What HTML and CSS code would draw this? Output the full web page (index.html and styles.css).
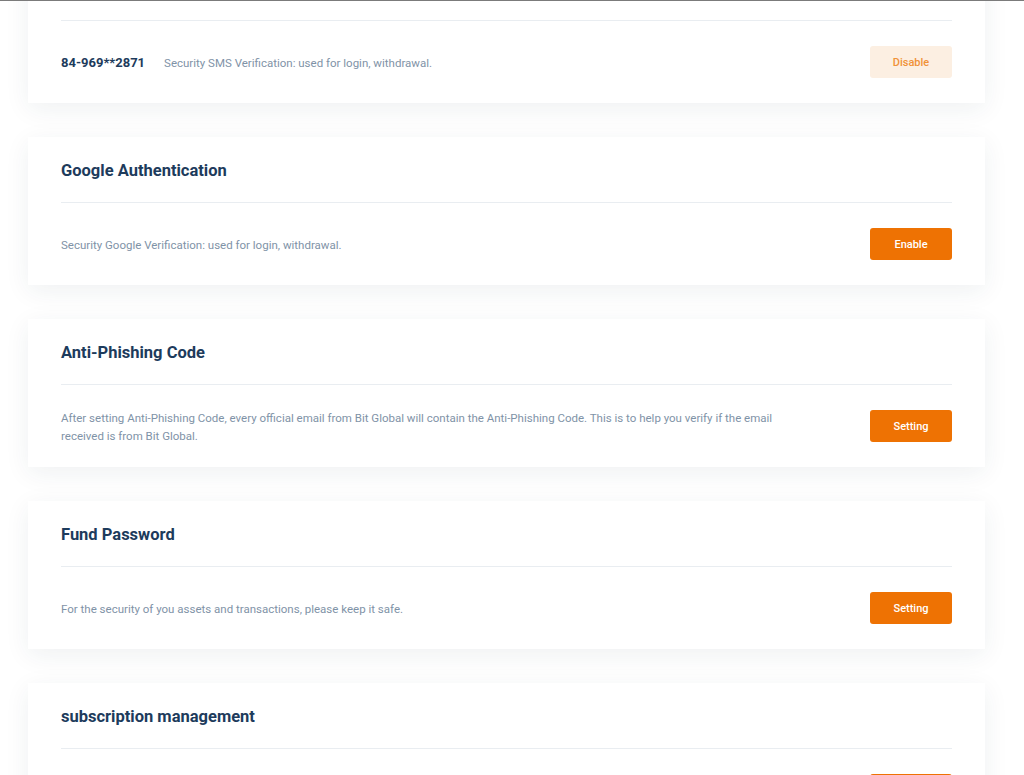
FILE: index.html
```html
<!DOCTYPE html>
<html lang="en">
<head>
  <meta charset="UTF-8">
  <title>Security Settings</title>
  <link rel="stylesheet" href="styles.css">
</head>
<body>
  <div class="topline"></div>
  <div class="viewport">
    <div class="list">

      <!-- SMS -->
      <div class="card">
        <div class="card-head">
          <h3>SMS Authentication</h3>
        </div>
        <div class="card-body">
          <div class="info">
            <span class="phone">84-969**2871</span>
            <span class="desc">Security SMS Verification: used for login, withdrawal.</span>
          </div>
          <button class="btn btn-light">Disable</button>
        </div>
      </div>

      <!-- Google -->
      <div class="card">
        <div class="card-head">
          <h3>Google Authentication</h3>
        </div>
        <div class="card-body">
          <div class="info">
            <span class="desc">Security Google Verification: used for login, withdrawal.</span>
          </div>
          <button class="btn">Enable</button>
        </div>
      </div>

      <!-- Anti-phishing -->
      <div class="card">
        <div class="card-head">
          <h3>Anti-Phishing Code</h3>
        </div>
        <div class="card-body">
          <div class="info">
            <p class="desc wide">After setting Anti-Phishing Code, every official email from Bit Global will contain the Anti-Phishing Code. This is to help you verify if the email received is from Bit Global.</p>
          </div>
          <button class="btn">Setting</button>
        </div>
      </div>

      <!-- Fund password -->
      <div class="card">
        <div class="card-head">
          <h3>Fund Password</h3>
        </div>
        <div class="card-body">
          <div class="info">
            <span class="desc">For the security of you assets and transactions, please keep it safe.</span>
          </div>
          <button class="btn">Setting</button>
        </div>
      </div>

      <!-- Subscription -->
      <div class="card">
        <div class="card-head">
          <h3>subscription management</h3>
        </div>
        <div class="card-body">
          <div class="info">
            <span class="desc">Manage the emails you receive from Bit Global.</span>
          </div>
          <button class="btn">Setting</button>
        </div>
      </div>

    </div>
  </div>
</body>
</html>
```

FILE: styles.css
```css
/* page */
html, body {
  margin: 0;
  height: 100%;
  overflow: hidden;
}
body {
  font-family: Roboto, "Noto Sans", Arial, sans-serif;
  background: #fff;
  color: #1d3b5c;
}
.topline {
  height: 1px;
  background: #7b7b7b;
}
.viewport {
  height: 774px;
  overflow: hidden;
}
/* scrolled position: first card is cut at the top */
.list {
  margin-top: -46px;
  padding: 0 39px 0 28px;
  display: flex;
  flex-direction: column;
  gap: 34px;
}

/* cards */
.card {
  background: #fff;
  box-shadow: 0 6px 24px rgba(30, 50, 70, 0.07);
  padding: 0 33px;
}
.card-head {
  height: 65px;
  display: flex;
  align-items: center;
  border-bottom: 1px solid #e9edf1;
}
.card-head h3 {
  margin: 0;
  font-size: 16.5px;
  font-weight: 700;
  color: #1d3b5c;
  padding-top: 2px;
}
.card-body {
  height: 82px;
  display: flex;
  align-items: center;
  justify-content: space-between;
}
.info {
  display: flex;
  align-items: center;
  gap: 19px;
  padding-top: 1px;
}
.phone {
  font-size: 13px;
  font-weight: 700;
  color: #1d3b5c;
}
.desc {
  font-size: 11.5px;
  color: #7f93a7;
  margin: 0;
}
.desc.wide {
  max-width: 740px;
  line-height: 18px;
}

/* buttons */
.btn {
  width: 82px;
  height: 32px;
  border: none;
  border-radius: 3px;
  background: #ee7203;
  color: #fff;
  font-family: inherit;
  font-size: 11px;
  font-weight: 500;
  padding-top: 2px;
  cursor: pointer;
}
.btn-light {
  background: #fcefe2;
  color: #f09238;
}
```
